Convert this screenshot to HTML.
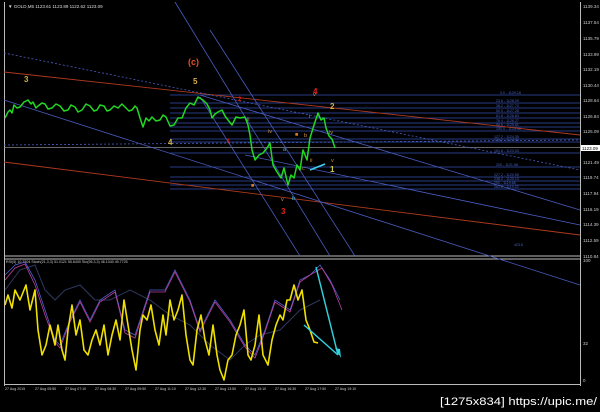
<!DOCTYPE html>
<html><head><meta charset="utf-8"><style>
html,body{margin:0;padding:0;background:#000;width:600px;height:412px;overflow:hidden}
svg{display:block;font-family:"Liberation Sans",sans-serif}
</style></head><body>
<svg width="600" height="412" viewBox="0 0 600 412" xmlns="http://www.w3.org/2000/svg">
<rect width="600" height="412" fill="#000"/>
<line x1="4.5" y1="2" x2="4.5" y2="386" stroke="#bbb" stroke-width="1"/>
<line x1="580.5" y1="2" x2="580.5" y2="386" stroke="#bbb" stroke-width="1"/>
<line x1="4" y1="256" x2="581" y2="256" stroke="#bbb"/>
<line x1="4" y1="259" x2="581" y2="259" stroke="#bbb"/>
<line x1="4" y1="384.5" x2="581" y2="384.5" stroke="#bbb"/>
<text x="8" y="8" fill="#ddd" font-size="4.5">▼ GOLD,M5  1123.61 1123.89 1122.62 1123.09</text>
<g stroke="#3550b0" stroke-width="0.8">
<line x1="170" y1="95" x2="580" y2="95"/><line x1="170" y1="103" x2="580" y2="103"/>
<line x1="170" y1="108" x2="580" y2="108"/><line x1="170" y1="113" x2="580" y2="113"/>
<line x1="170" y1="118" x2="580" y2="118"/><line x1="170" y1="123" x2="580" y2="123"/>
<line x1="170" y1="127" x2="580" y2="127"/><line x1="170" y1="131" x2="580" y2="131"/>
<line x1="170" y1="139" x2="580" y2="139"/><line x1="170" y1="142" x2="580" y2="142"/>
<line x1="170" y1="153" x2="580" y2="153"/><line x1="170" y1="167" x2="580" y2="167"/>
<line x1="170" y1="177" x2="580" y2="177"/><line x1="170" y1="181" x2="580" y2="181"/>
<line x1="170" y1="185" x2="580" y2="185"/><line x1="170" y1="189" x2="580" y2="189"/>
</g>
<g fill="#4a64c8" font-size="3.6">
<text x="500" y="94">0.0 - 1129.18</text><text x="496" y="102">23.6 - 1128.29</text>
<text x="496" y="107">38.2 - 1127.73</text><text x="496" y="112">50.0 - 1127.28</text>
<text x="496" y="117">61.8 - 1126.83</text><text x="496" y="122">76.4 - 1126.27</text>
<text x="496" y="126">88.6 - 1125.81</text><text x="496" y="130">100.0 - 1125.38</text>
<text x="494" y="138">127.2 - 1124.35</text><text x="494" y="141">138.2 - 1123.93</text>
<text x="494" y="152">161.8 - 1123.03</text><text x="496" y="166">200 - 1121.58</text>
<text x="494" y="176">227.2 - 1120.55</text><text x="494" y="180">238.2 - 1120.13</text>
<text x="494" y="184">250 - 1119.68</text><text x="494" y="188">261.8 - 1119.23</text>
<text x="514" y="246">423.6</text>
</g>
<line x1="4" y1="147.5" x2="580" y2="147.5" stroke="#888" stroke-width="0.8"/>
<line x1="4" y1="72" x2="580" y2="135" stroke="#b03a1e" stroke-width="0.9"/>
<line x1="4" y1="162" x2="580" y2="235" stroke="#b03a1e" stroke-width="0.9"/>
<g stroke="#4a5cc0" stroke-width="0.8" fill="none">
<line x1="4" y1="53" x2="580" y2="170" stroke-dasharray="2,2"/>
<line x1="4" y1="145" x2="580" y2="140" stroke-dasharray="2,2"/>
<line x1="4" y1="100" x2="580" y2="285"/>
<line x1="200" y1="95" x2="580" y2="210"/>
<line x1="175" y1="2" x2="330" y2="256"/>
<line x1="200" y1="97" x2="300" y2="256"/>
<line x1="210" y1="30" x2="355" y2="256"/>
<line x1="245" y1="155" x2="580" y2="225"/>
</g>
<polyline fill="none" stroke="#22d822" stroke-width="1.5" stroke-linejoin="round" points="5,118 8,112 10,110 12,113 14,105 17,108 20,107 24,102 28,100 31,104 33,102 36,108 38,106 42,103 45,104 48,109 52,108 56,104 60,106 64,111 68,110 71,105 75,107 78,112 82,110 86,104 90,106 94,111 97,110 100,105 104,106 107,111 110,110 114,106 118,108 122,104 125,107 129,111 132,110 135,106 137,108 140,118 143,127 146,118 149,121 152,117 156,121 160,120 163,115 166,117 170,126 174,125 178,118 182,118 186,108 190,103 194,105 198,97 203,100 207,104 210,110 212,118 215,114 218,112 222,110 225,116 228,120 232,125 236,117 240,118 245,117 248,125 250,135 252,150 255,160 259,155 263,153 267,148 270,143 273,165 277,172 281,178 284,168 288,185 291,175 294,178 297,165 300,170 303,150 307,160 310,138 314,125 318,113 321,120 324,118 326,128 329,136 332,139 335,148"/>
<g font-size="8" font-weight="bold">
<text x="24" y="82" fill="#c8b040">3</text>
<text x="193" y="84" fill="#d8b040">5</text>
<text x="188" y="65" fill="#e05020" font-size="9">(c)</text>
<text x="168" y="145" fill="#d8b040">4</text>
<text x="313" y="94" fill="#e02020">4</text>
<text x="330" y="109" fill="#d8b040">2</text>
<text x="330" y="172" fill="#d8d040">1</text>
<text x="281" y="214" fill="#e02020">3</text>
<text x="227" y="143" fill="#e02020" font-size="6">1</text>
<text x="238" y="101" fill="#e02020" font-size="6">2</text>
</g>
<g font-size="5.5" fill="#d09040">
<text x="247" y="121">ii</text><text x="268" y="133">iv</text><text x="329" y="134">iv</text>
<text x="295" y="136" fill="#d08020">■</text><text x="251" y="187" fill="#d08020">■</text>
<text x="313" y="96">v</text><text x="331" y="162">v</text><text x="281" y="201">v</text>
<text x="283" y="151" fill="#40c0e0">a</text><text x="304" y="137">b</text>
<text x="302" y="170">c</text><text x="292" y="200" fill="#40c0e0">b</text>
<text x="309" y="118">i</text><text x="310" y="162">ii</text>
</g>
<line x1="310" y1="170" x2="325" y2="164" stroke="#40d0f0" stroke-width="1.5"/>
<g fill="#ccc" font-size="4.5">
<text x="583" y="8">1139.34</text><text x="583" y="24">1137.54</text><text x="583" y="40">1135.79</text>
<text x="583" y="56">1133.99</text><text x="583" y="71">1132.19</text><text x="583" y="87">1130.44</text>
<text x="583" y="102">1128.64</text><text x="583" y="118">1126.84</text><text x="583" y="133">1125.09</text>
<text x="583" y="164">1121.49</text><text x="583" y="179">1119.74</text><text x="583" y="195">1117.94</text>
<text x="583" y="211">1116.19</text><text x="583" y="226">1114.39</text><text x="583" y="242">1112.59</text>
<text x="583" y="258">1110.84</text><text x="583" y="262">100</text><text x="583" y="345">32</text><text x="583" y="382">0</text>
</g>
<rect x="581" y="145" width="19" height="6" fill="#fff"/>
<text x="582" y="150" fill="#000" font-size="4.5">1123.09</text>
<text x="6" y="263" fill="#ccc" font-size="3.6">RSI(5) 10.3304  Stoch(21,3,3) 51.0121 55.6400  Sto(95,3,3) 46.1040 49.7725</text>
<polyline fill="none" stroke="#303860" stroke-width="1" points="5,290 20,270 35,265 45,290 55,300 65,290 80,285 95,300 110,300 130,290 150,300 170,315 190,325 210,345 230,360 245,345 260,335 280,330 300,310 320,300"/>
<polyline fill="none" stroke="#5060d0" stroke-width="0.8" points="5,275 15,265 25,262 35,280 45,310 55,340 60,345 70,320 80,300 90,320 100,300 115,290 125,330 135,335 150,290 165,290 175,270 190,300 200,330 215,300 230,320 245,345 255,355 265,330 275,300 290,310 300,280 310,275 320,265 330,280 340,300"/>
<polyline fill="none" stroke="#c040a0" stroke-width="0.8" points="5,280 15,268 25,264 35,285 45,315 55,342 60,348 70,322 80,302 90,322 100,302 115,292 125,333 135,338 150,292 165,292 175,272 190,302 200,332 215,302 230,322 245,347 255,358 265,332 275,302 290,312 300,282 310,275 322,268 332,285 342,310"/>
<polyline fill="none" stroke="#f0e000" stroke-width="1.6" stroke-linejoin="round" points="5,305 8,295 12,308 15,290 20,300 26,285 30,310 35,290 38,330 42,355 46,345 50,325 55,345 58,325 62,350 65,360 68,330 72,305 76,335 80,320 84,350 88,355 92,340 96,330 100,345 104,325 108,355 112,335 116,320 120,340 124,300 128,325 132,350 136,370 140,330 143,315 147,320 151,305 155,330 159,345 163,315 166,335 170,300 174,320 178,310 182,295 186,335 190,360 193,365 197,330 201,315 205,340 209,355 213,325 217,355 220,370 224,380 228,360 232,355 236,335 240,325 244,310 248,355 251,360 255,345 259,315 263,355 268,365 272,340 276,325 280,315 283,320 287,300 290,300 294,285 298,300 302,290 306,320 310,330 314,342 318,343"/>
<line x1="316" y1="267" x2="338" y2="355" stroke="#30d0e0" stroke-width="1.5"/>
<line x1="304" y1="325" x2="338" y2="355" stroke="#30d0e0" stroke-width="1.5"/>
<polygon points="335,348 341,358 340,349" fill="#30d0e0"/>
<g fill="#ccc" font-size="3.6">
<text x="5" y="390">27 Aug 2015</text><text x="35" y="390">27 Aug 05:50</text><text x="65" y="390">27 Aug 07:10</text>
<text x="95" y="390">27 Aug 08:30</text><text x="125" y="390">27 Aug 09:50</text><text x="155" y="390">27 Aug 11:10</text>
<text x="185" y="390">27 Aug 12:30</text><text x="215" y="390">27 Aug 13:50</text><text x="245" y="390">27 Aug 15:10</text>
<text x="275" y="390">27 Aug 16:30</text><text x="305" y="390">27 Aug 17:50</text><text x="335" y="390">27 Aug 19:10</text>
</g>
<text x="440" y="405" fill="#fff" font-size="11" textLength="157" lengthAdjust="spacingAndGlyphs">[1275x834] https://upic.me/</text>
</svg>
</body></html>
